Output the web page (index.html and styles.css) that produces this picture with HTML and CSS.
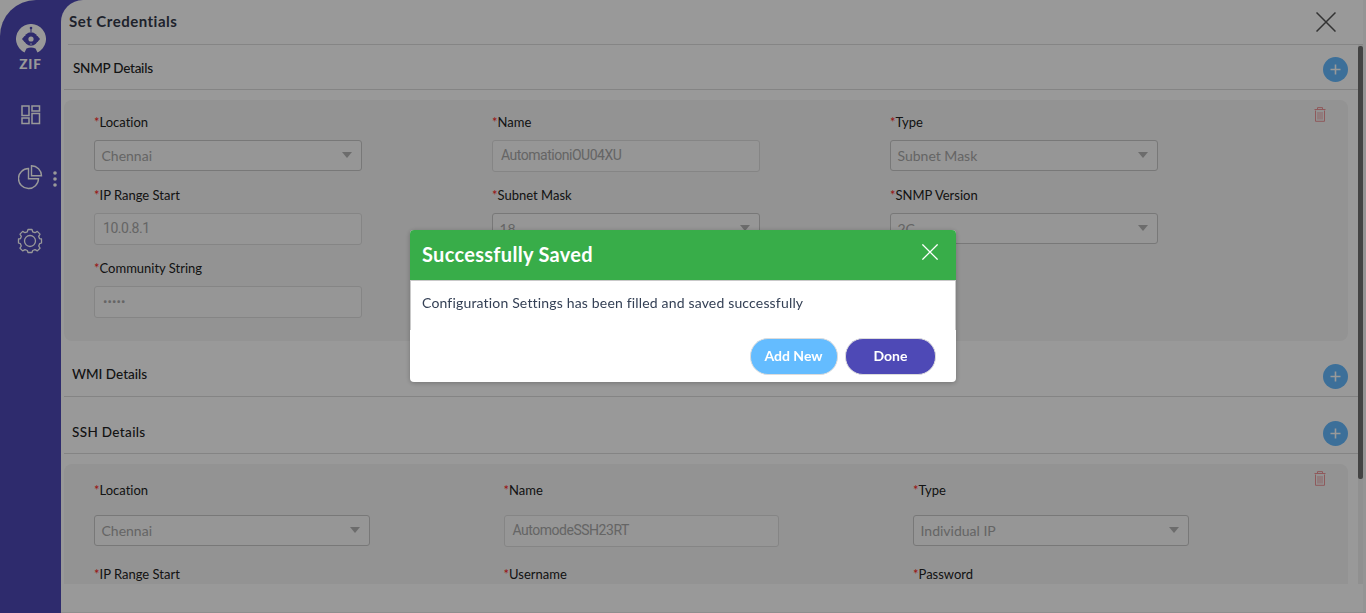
FILE: index.html
```html
<!DOCTYPE html>
<html lang="en">
<head>
<meta charset="utf-8">
<title>Set Credentials</title>
<link rel="stylesheet" href="styles.css">
</head>
<body>
<svg class="defs" width="0" height="0">
  <symbol id="trash" viewBox="0 0 12 15"><path d="M.5 2.500h11M3.500 2.300V.600h5v1.700M1.500 3.500v10.800h9V3.500" fill="none" stroke="currentColor"/><path d="M4 5v7.500M6 5v7.500M8 5v7.500" fill="none" stroke="currentColor" stroke-width=".8"/></symbol>
  <symbol id="plus" viewBox="0 0 11 11"><path d="M5.500.500v10M.5 5.500h10" fill="none" stroke="currentColor" stroke-width="1.600"/></symbol>
</svg>
<div class="app">
  <nav class="sidebar">
    <div class="brand">
      <svg width="30" height="30" viewBox="0 0 30 30"><path d="M8.500 28.500A15 15 0 1 1 21.500 28.500L19.500 24.500Q15 22.500 10.500 24.500Z" fill="#fff"/><circle cx="15" cy="15" r="6.800" fill="#4e49b6"/><path d="M6 15l2.500-3h13L24 15l-2.500 3h-13z" fill="#4e49b6"/><path d="M15 3v5" stroke="#4e49b6" stroke-width="1"/><circle cx="15" cy="4" r="1.300" fill="#4e49b6"/><circle cx="15" cy="15" r="2.600" fill="#fff"/><circle cx="15" cy="20" r=".7" fill="#fff"/><path d="M11.500 30v-4.500q3.500-2.500 7 0V30z" fill="#4e49b6"/></svg>
      <span>ZIF</span>
    </div>
    <svg class="nav-grid" width="20" height="20" viewBox="0 0 20 20"><path d="M1 1h7v9.500H1zM11 1h7.500v5H11zM1 13h7v5.500H1zM11 8.500h7.500v10H11z" fill="none" stroke="#fff" stroke-width="1.500"/></svg>
    <div class="nav-chart">
      <svg width="25" height="25" viewBox="0 0 25 25"><path d="M10.500 3.500v10.200h10A10 10 0 1 1 10.500 3.500z" fill="none" stroke="#fff" stroke-width="1.400"/><path d="M13.500.800v9.900h10A10 10 0 0 0 13.500.800z" fill="none" stroke="#fff" stroke-width="1.400"/></svg>
      <svg class="dots" width="4" height="16" viewBox="0 0 4 16"><g fill="#fff"><circle cx="2" cy="2" r="1.800"/><circle cx="2" cy="8" r="1.800"/><circle cx="2" cy="14" r="1.800"/></g></svg>
    </div>
    <svg class="nav-gear" width="26" height="26" viewBox="-13 -13 26 26"><g fill="none" stroke="#fff" stroke-width="1.300" stroke-linejoin="round"><path d="M-2-11.500h4l.7 2.300 2.300.9 2.300-1.300 2.700 2.700-1.300 2.300.9 2.300 1.900.3v4l-1.900.7-.9 2.300 1.300 2.200-2.700 2.700-2.300-1.300-2.300.9L2 11.500h-4l-.7-2-2.300-.9-2.300 1.300-2.700-2.700 1.300-2.200-.9-2.300-1.900-.7v-4l1.900-.3.900-2.300-1.300-2.300 2.700-2.700 2.300 1.300 2.300-.9z"/><circle r="5.500"/></g></svg>
  </nav>
  <main class="panel">
    <header class="title-bar"><h1>Set Credentials</h1>
      <svg width="20" height="20" viewBox="0 0 20 20"><path d="M.5.500l19 19M19.500.500l-19 19" stroke="#555" stroke-width="1.500"/></svg>
    </header>
    <div class="scroll">
      <div class="sections">
        <div class="section-head first"><h2>SNMP Details</h2><button class="add"><svg width="11" height="11"><use href="#plus"/></svg></button></div>
        <section class="card snmp">
          <svg class="trash" width="12" height="15"><use href="#trash"/></svg>
          <div class="field"><label><i>*</i>Location</label><div class="select">Chennai</div></div>
          <div class="field"><label><i>*</i>Name</label><div class="input">AutomationiOU04XU</div></div>
          <div class="field"><label><i>*</i>Type</label><div class="select">Subnet Mask</div></div>
          <div class="field"><label><i>*</i>IP Range Start</label><div class="input">10.0.8.1</div></div>
          <div class="field"><label><i>*</i>Subnet Mask</label><div class="select">18</div></div>
          <div class="field"><label><i>*</i>SNMP Version</label><div class="select">2C</div></div>
          <div class="field"><label><i>*</i>Community String</label><div class="input secret">•••••</div></div>
        </section>
        <div class="section-head"><h2>WMI Details</h2><button class="add"><svg width="11" height="11"><use href="#plus"/></svg></button></div>
        <div class="section-head wide"><h2>SSH Details</h2><button class="add"><svg width="11" height="11"><use href="#plus"/></svg></button></div>
        <section class="card ssh">
          <svg class="trash" width="12" height="15"><use href="#trash"/></svg>
          <div class="field"><label><i>*</i>Location</label><div class="select">Chennai</div></div>
          <div class="field"><label><i>*</i>Name</label><div class="input">AutomodeSSH23RT</div></div>
          <div class="field"><label><i>*</i>Type</label><div class="select">Individual IP</div></div>
          <div class="field"><label><i>*</i>IP Range Start</label></div>
          <div class="field"><label><i>*</i>Username</label></div>
          <div class="field"><label><i>*</i>Password</label></div>
        </section>
      </div>
      <div class="track"><div class="thumb"></div></div>
    </div>
  </main>
</div>
<div class="overlay">
  <div class="modal">
    <div class="modal-head"><h3>Successfully Saved</h3>
      <svg width="16" height="16" viewBox="0 0 16 16"><path d="M.4.400l15.200 15.200M15.600.400L.4 15.600" stroke="#fff" stroke-width="1.300"/></svg>
    </div>
    <div class="modal-body"><span>Configuration Settings has been filled and saved successfully</span></div>
    <div class="modal-foot"><button class="btn new">Add New</button><button class="btn done">Done</button></div>
  </div>
</div>
</body>
</html>
```

FILE: styles.css
```css
* { box-sizing: border-box; }
body { margin: 0; height: 613px; overflow: hidden; background: #fff; font-family: Lato, "Open Sans", sans-serif; font-variant-ligatures: none; color: #222; }
h1, h2, h3 { margin: 0; font-weight: 500; }
svg { display: block; flex: none; }
button { border: 0; padding: 0; font-family: inherit; }
.defs { position: absolute; }

.app { display: flex; height: 613px; background: #4e49b6; border-top-left-radius: 36px; }
.sidebar { width: 61px; display: flex; flex-direction: column; align-items: center; padding-top: 24px; }
.brand { display: flex; flex-direction: column; align-items: center; height: 81px; color: #fff; }
.brand span { font: 900 12.500px/14px Lato, sans-serif; letter-spacing: .8px; margin: 4px 1px 0 0; transform: scaleX(1.08); }
.nav-grid { margin-left: 1px; }
.nav-chart { width: 61px; display: flex; align-items: center; padding-left: 18px; margin-top: 40px; gap: 9.500px; }
.nav-chart .dots { margin-top: 3px; }
.nav-gear { margin: 38px 1px 0 0; }

.panel { flex: 1; min-width: 0; background: #fff; border-top-left-radius: 22px; padding-right: 3px; border-bottom: 1px solid #ededed; box-shadow: inset -3px 0 #f7f7f7; }
.title-bar { height: 45px; margin-left: 7px; padding-right: 27px; display: flex; align-items: center; justify-content: space-between; border-bottom: 1px solid #dedede; }
.title-bar h1 { font-size: 15px; line-height: 20px; font-weight: 700; color: #343a4a; letter-spacing: .5px; margin: 0 0 3px 1px; }
.scroll { display: flex; height: 539px; margin-left: 3px; overflow: hidden; }
.sections { flex: 1; overflow: hidden; }
.track { width: 5px; background: #f1f1f1; padding-top: 1px; }
.thumb { height: 433px; background: #707070; border-radius: 2px; }
.section-head { height: 56px; margin-bottom: 1px; padding: 15px 10px 0 8px; border-bottom: 1px solid #dcdcdc; display: flex; align-items: center; justify-content: space-between; }
.section-head.first { height: 45px; padding: 4px 10px 0 9px; margin-bottom: 10px; }
.section-head h2 { font-size: 13.500px; line-height: 18px; margin-bottom: 4px; }
.section-head.first h2 { letter-spacing: -.25px; margin-bottom: 3px; }
.section-head.wide { padding-top: 16px; }
.section-head.wide h2 { letter-spacing: .35px; }
.add { width: 25px; height: 25px; border-radius: 50%; background: #64baff; color: #fff; display: flex; align-items: center; justify-content: center; }
.card { position: relative; margin-right: 10px; background: #f5f5f5; border-radius: 8px; padding-left: 30px; display: grid; align-content: start; }
.trash { position: absolute; top: 7px; right: 22px; color: #ee9498; }
.snmp { height: 241px; grid-template-columns: repeat(3, 398px); grid-auto-rows: 73px; padding-top: 12px; }
.ssh { height: 300px; margin-top: 10px; grid-template-columns: repeat(3, 409.500px); grid-auto-rows: 84px; padding-top: 16px; }
.field { width: 267.500px; }
.field label { display: flex; font-size: 13px; line-height: 20px; height: 28px; }
.field i { font-style: normal; color: #f22; }
.ssh .field { width: 275.500px; }
.ssh label { height: 35px; }
.select, .input { height: 31px; line-height: 29px; border: 1px solid #c8c8c8; border-radius: 3px; background: #fafafa; color: #a9a9a9; font-size: 14px; padding: 0 8.500px 0 6.500px; }
.select { line-height: 27px; padding-bottom: 1px; display: flex; align-items: center; justify-content: space-between; }
.select::after { content: ""; border: 5px solid transparent; border-top: 6px solid #b4b4b4; border-bottom: 0; }
.input { height: 32px; border-color: #dedede; padding-left: 8px; font-family: Roboto, sans-serif; letter-spacing: -.48px; }
.secret { font-size: 13px; letter-spacing: .1px; }

.overlay { position: fixed; inset: 0; background: rgba(0, 0, 0, .4); display: flex; justify-content: center; align-items: flex-start; padding-top: 230px; }
.modal { width: 546px; height: 152px; background: #fff; border-radius: 4px; overflow: hidden; box-shadow: 0 1px 5px rgba(0, 0, 0, .25); }
.modal-head { height: 50px; background: #38ad49; display: flex; justify-content: space-between; padding: 0 18px 0 12px; align-items: center; color: #fff; }
.modal-head h3 { font-size: 20px; line-height: 24px; font-weight: 700; letter-spacing: .3px; margin-bottom: 2px; }
.modal-head svg { margin-bottom: 6px; }
.modal-body { height: 50px; border: 1px solid #c9c9c9; border-bottom: 0; padding: 12px 11px; color: #344055; font-size: 14px; line-height: 20px; letter-spacing: .17px; }
.modal-foot { display: flex; justify-content: flex-end; gap: 7.500px; padding: 8px 20px 0 0; }
.btn { height: 37px; border-radius: 18px; color: #fff; font-size: 14px; font-weight: 700; border: 1px solid #dcdcdc; padding-bottom: 2px; }
.new { width: 88px; background: #64bcff; }
.done { width: 91px; background: #4e49b6; }
```
